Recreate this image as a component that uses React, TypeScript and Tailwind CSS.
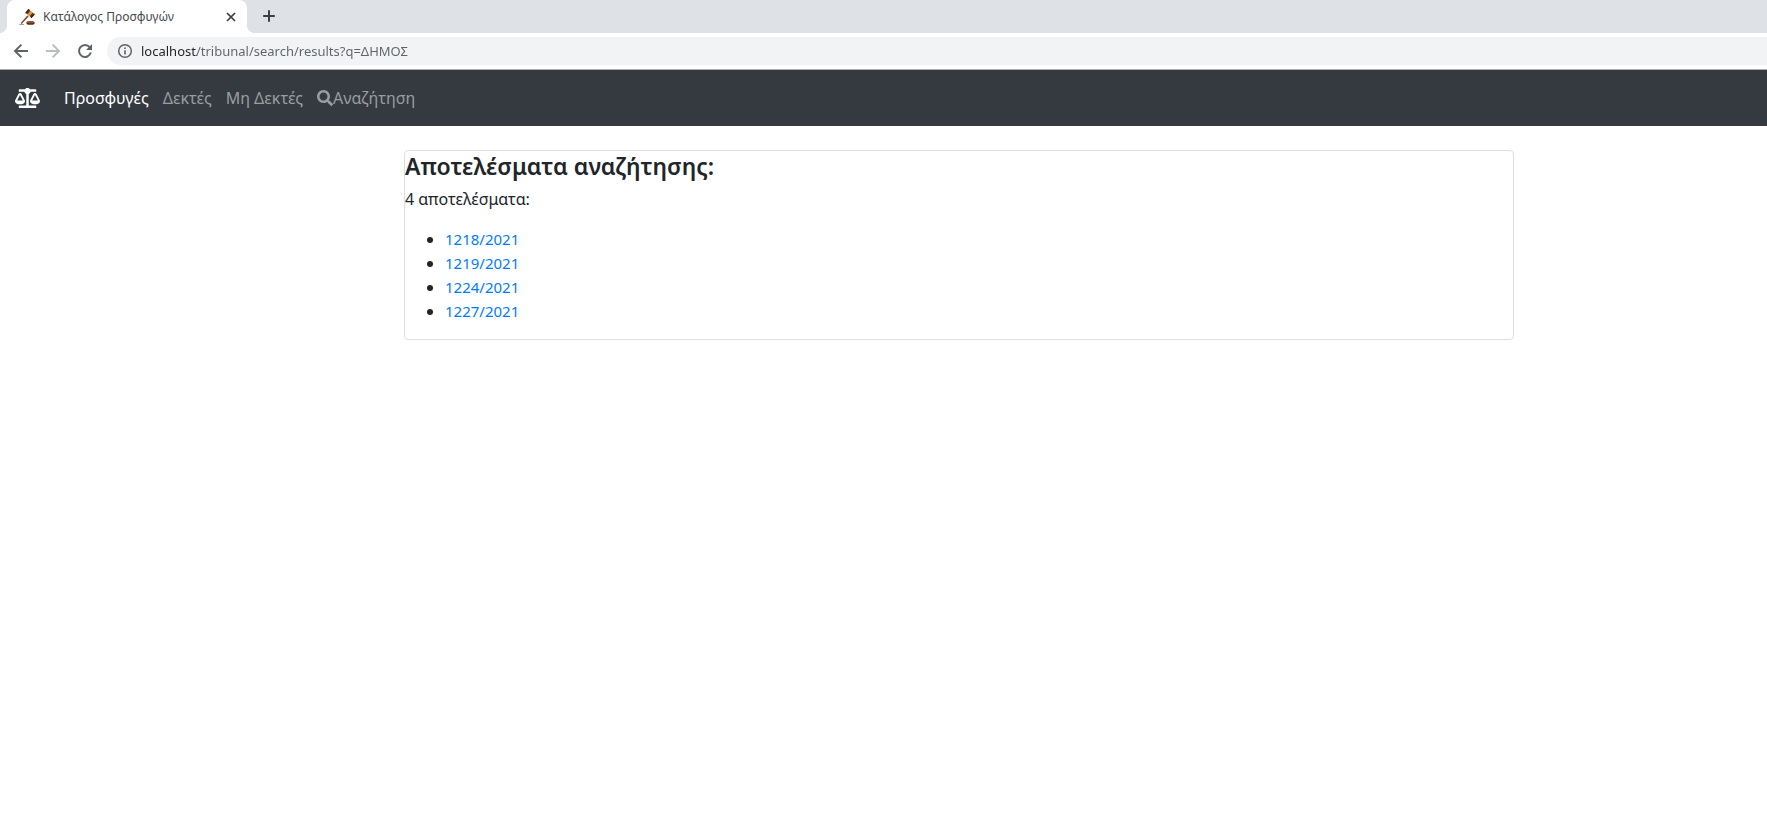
import { FaBalanceScale, FaSearch } from "react-icons/fa";
import { Plus, X } from "lucide-react";

const results = ["1218/2021", "1219/2021", "1224/2021", "1227/2021"];

function Gavel() {
  return (
    <svg viewBox="0 0 16 16" className="size-4 shrink-0" aria-hidden="true">
      <path d="M1.6 14.2 8.4 6.4l1.2 1-7 7.6z" fill="#7a3f1c" />
      <path d="M0 15.4c1-.9 3.4-1 5-.2v.7H.2z" fill="#9aa0a6" />
      <g transform="rotate(40 11 4.5)">
        <rect x="7" y="2.2" width="8" height="4.6" rx="1" fill="#6b3415" />
        <rect x="9.6" y="2" width="2.8" height="5" fill="#e0a04a" />
        <rect x="6.8" y="1.8" width="1.5" height="5.4" rx=".6" fill="#4a220d" />
        <rect x="13.8" y="1.8" width="1.5" height="5.4" rx=".6" fill="#4a220d" />
      </g>
      <ellipse cx="11.5" cy="13.9" rx="4.2" ry="1.9" fill="#5a2a12" />
      <ellipse cx="11.5" cy="13.2" rx="3.6" ry="1" fill="#9a5526" />
    </svg>
  );
}

function ArrowIcon({ className = "" }: { className?: string }) {
  return (
    <svg viewBox="0 0 18 18" className={`size-[18px] ${className}`} fill="none" stroke="currentColor" strokeWidth="2" aria-hidden="true">
      <path d="M16 9H3.2M9.4 2.6 3 9l6.4 6.4" />
    </svg>
  );
}

function ReloadIcon() {
  return (
    <svg viewBox="0 0 18 18" className="size-[18px]" aria-hidden="true">
      <path d="M13.7 5.2A6 6 0 1 0 14.8 10.6" fill="none" stroke="currentColor" strokeWidth="2" />
      <path d="M16 2v6h-6z" fill="currentColor" />
    </svg>
  );
}

function InfoIcon() {
  return (
    <svg viewBox="0 0 16 16" className="size-4 shrink-0 text-[#5f6368]" fill="none" stroke="currentColor" aria-hidden="true">
      <circle cx="8" cy="8" r="6.3" strokeWidth="1.5" />
      <path d="M8 7.2v4.2M8 4.4V6" strokeWidth="1.6" />
    </svg>
  );
}

function TabStrip() {
  return (
    <div className="flex h-[33px] items-start bg-[#dee1e6] pl-[7px]">
      <div className="relative flex h-[33px] w-60 items-center rounded-t-lg bg-white pr-2 pl-3">
        <span className="absolute bottom-0 -left-2 size-2 bg-[radial-gradient(circle_at_0_0,#dee1e6_8px,#ffffff_8px)]" />
        <span className="absolute -right-2 bottom-0 size-2 bg-[radial-gradient(circle_at_100%_0,#dee1e6_8px,#ffffff_8px)]" />
        <Gavel />
        <span className="ml-2 flex-1 truncate text-xs text-[#45494d]">Κατάλογος Προσφυγών</span>
        <button aria-label="Κλείσιμο καρτέλας" className="flex size-4 items-center justify-center text-[#3c4043]">
          <X className="size-4" strokeWidth={2.6} strokeLinecap="butt" />
        </button>
      </div>
      <button aria-label="Νέα καρτέλα" className="ml-[6px] flex size-8 items-center justify-center text-[#3c4043]">
        <Plus className="size-5" strokeWidth={2.4} strokeLinecap="butt" />
      </button>
    </div>
  );
}

function Toolbar() {
  return (
    <div className="flex h-[37px] items-center border-b border-[#a9abae] bg-white pl-3">
      <div className="flex gap-[14px] text-[#5f6368]">
        <button aria-label="Πίσω"><ArrowIcon /></button>
        <button aria-label="Εμπρός" className="text-[#babcbe]"><ArrowIcon className="rotate-180" /></button>
        <button aria-label="Ανανέωση"><ReloadIcon /></button>
      </div>
      <div className="ml-[13px] flex h-7 flex-1 items-center gap-2 rounded-l-full bg-[#f1f3f4] pl-[10px]">
        <InfoIcon />
        <input
          type="text"
          aria-label="Διεύθυνση"
          defaultValue="localhost/tribunal/search/results?q=ΔΗΜΟΣ"
          className="h-7 flex-1 bg-[linear-gradient(to_right,#202124_56px,#5f6368_56px)] bg-clip-text text-[13px] text-transparent caret-[#202124] outline-none"
        />
      </div>
    </div>
  );
}

function Navbar() {
  return (
    <nav className="flex h-14 items-center bg-[#343a40] px-[15px] text-base text-[#999da0]">
      <a href="#" aria-label="Αρχική" className="mr-[17px] text-white"><FaBalanceScale className="h-5 w-[25px]" /></a>
      <a href="#" className="px-[7px] py-2 text-white">Προσφυγές</a>
      <a href="#" className="px-[7px] py-2">Δεκτές</a>
      <a href="#" className="px-[7px] py-2">Μη Δεκτές</a>
      <a href="#" className="flex items-center px-[7px] py-2"><FaSearch className="size-4" />Αναζήτηση</a>
    </nav>
  );
}

export default function App() {
  return (
    <div className="min-h-screen bg-white font-['Noto_Sans','Open_Sans',sans-serif] text-[#212529]">
      <TabStrip />
      <Toolbar />
      <Navbar />
      <main className="pt-6 pr-[253px] pl-[404px]">
        <section className="rounded border border-[#dfdfdf] text-base leading-6">
          <h1 className="mb-[6px] text-[23px] leading-[30px] font-semibold">Αποτελέσματα αναζήτησης:</h1>
          <p className="mb-4">4 αποτελέσματα:</p>
          <ul className="mb-4 list-disc pl-10">
            {results.map((r) => (
              <li key={r}><a href="#" className="text-[15px] text-[#007bff]">{r}</a></li>
            ))}
          </ul>
        </section>
      </main>
    </div>
  );
}
